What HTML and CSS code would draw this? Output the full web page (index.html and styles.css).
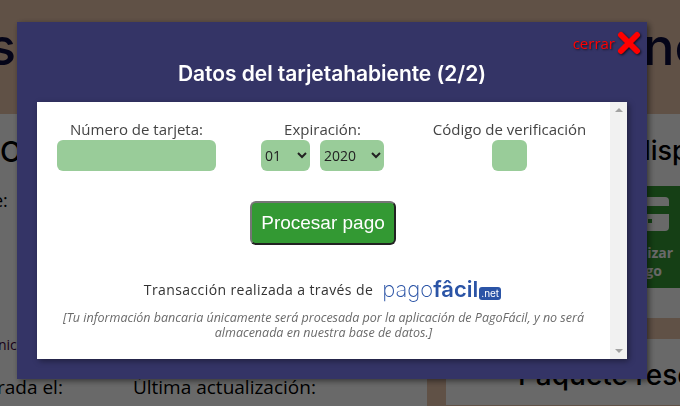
FILE: index.html
```html
<!DOCTYPE html>
<html lang="es">
  <head>
    <meta charset="UTF-8">
    <title>Datos del tarjetahabiente</title>
    <link rel="stylesheet" href="styles.css">
  </head>
  <body>
    <div class="page">
      <header class="page-header">
        <span class="page-header-start">s</span>
        <span class="page-header-end">no</span>
      </header>
      <div class="columns">
        <section class="panel panel-left">
          <h2 class="panel-title">O</h2>
          <p class="panel-label">e:</p>
          <p class="panel-small">nic</p>
          <div class="panel-dates">
            <span>rada el:</span>
            <span>Última actualización:</span>
          </div>
        </section>
        <div class="side">
          <section class="panel panel-pay">
            <h2 class="side-title">disp</h2>
            <div class="pay-tile">
              <span class="pay-card"><i class="pay-stripe"></i><i class="pay-dot"></i></span>
              <span class="pay-text">Realizar<br>pago</span>
            </div>
          </section>
          <section class="panel panel-package">
            <h2 class="package-title">Paquete rese</h2>
          </section>
        </div>
      </div>
    </div>

    <div class="overlay">
      <div class="modal">
        <a class="close" href="#">
          <span>cerrar</span>
          <svg width="24" height="24" viewBox="0 0 24 24">
            <path d="M4 4 L20 20 M20 4 L4 20" />
          </svg>
        </a>
        <h1 class="modal-title">Datos del tarjetahabiente (2/2)</h1>
        <div class="modal-body">
          <div class="modal-content">
            <div class="fields">
              <div class="field">
                <label for="numero">Número de tarjeta:</label>
                <input id="numero" class="input-number" type="text">
              </div>
              <div class="field">
                <label for="mes">Expiración:</label>
                <div class="selects">
                  <select id="mes" class="select-month"><option>01</option></select>
                  <select class="select-year"><option>2020</option></select>
                </div>
              </div>
              <div class="field">
                <label for="codigo">Código de verificación</label>
                <input id="codigo" class="input-code" type="text">
              </div>
            </div>
            <button class="submit" type="button">Procesar pago</button>
            <p class="provider">
              <span>Transacción realizada a través de</span>
              <span class="logo">
                <span class="logo-thin">pago</span><span class="logo-bold">fâcil</span><span class="logo-badge">.net</span>
              </span>
            </p>
            <p class="note">[Tu información bancaria únicamente será procesada por la aplicación de PagoFácil, y no será almacenada en nuestra base de datos.]</p>
          </div>
          <div class="scrollbar">
            <i class="arrow-up"></i>
            <i class="arrow-down"></i>
          </div>
        </div>
      </div>
    </div>
  </body>
</html>
```

FILE: styles.css
```css
html,
body {
  margin: 0;
  height: 100%;
  overflow: hidden;
}

body {
  background: #e8c4aa;
  font-family: "Open Sans", sans-serif;
  color: #000;
}

p,
h1,
h2 {
  margin: 0;
}

/* page behind the dialog */
.page-header {
  display: flex;
  justify-content: space-between;
  height: 114px;
  font: 500 52px/94px "Inter", sans-serif;
  color: #0b0b3a;
}
.page-header-start {
  margin-left: -12px;
}
.page-header-end {
  margin-right: -26px;
}

.columns {
  display: grid;
  grid-template-columns: 427px 1fr;
  gap: 19px;
}

.panel {
  background: #fff;
}

.panel-left {
  height: 292px;
}
.panel-title {
  font: 500 29px/40px "Inter", sans-serif;
  padding-top: 18px;
}
.panel-label {
  font-size: 18px;
  line-height: 24px;
  padding-top: 16px;
  margin-left: -7px;
}
.panel-small {
  font-size: 14px;
  line-height: 18px;
  padding-top: 124px;
  color: #400040;
  margin-left: -2px;
}
.panel-dates {
  display: flex;
  gap: 70px;
  font-size: 19px;
  line-height: 26px;
  padding-top: 20px;
  margin-left: -3px;
}

.side {
  display: flex;
  flex-direction: column;
  gap: 21px;
}

.panel-pay {
  height: 204px;
  padding-left: 164px;
}
.side-title {
  font: 500 27px/40px "Inter", sans-serif;
  padding-top: 17px;
  margin-left: 24px;
  height: 55px;
  white-space: nowrap;
}
.pay-tile {
  display: flex;
  flex-direction: column;
  align-items: center;
  width: 70px;
  height: 102px;
  padding-top: 11px;
  box-sizing: border-box;
  background: #339933;
  color: #fff;
}
.pay-card {
  display: block;
  width: 48px;
  height: 34px;
  background: #fff;
  border-radius: 4px;
}
.pay-stripe {
  display: block;
  height: 8px;
  margin-top: 9px;
  background: #339933;
}
.pay-dot {
  display: block;
  width: 4px;
  height: 4px;
  margin: 5px 0 0 27px;
  background: #339933;
}
.pay-text {
  margin-top: 13px;
  font-size: 14px;
  font-weight: 700;
  line-height: 18px;
  text-align: center;
}

.panel-package {
  height: 66px;
  padding-left: 72px;
}
.package-title {
  font: 500 28px/36px "Inter", sans-serif;
  padding-top: 18px;
  white-space: nowrap;
}

/* dialog */
.overlay {
  position: fixed;
  inset: 0;
  background: rgba(0, 0, 0, 0.59);
}

.modal {
  position: absolute;
  left: 17px;
  top: 22px;
  width: 590px;
  padding: 0 20px 20px;
  background: #343466;
  box-shadow: 2px 2px 6px rgba(0, 0, 0, 0.5);
}

.close {
  position: absolute;
  top: 9px;
  right: 6px;
  display: flex;
  align-items: center;
  gap: 2px;
  color: #f00;
  font-size: 15px;
  text-decoration: none;
  text-shadow: 1px 1px 2px rgba(0, 0, 0, 0.6);
}
.close path {
  fill: none;
  stroke: #f00;
  stroke-width: 6;
  stroke-linecap: round;
}
.close svg {
  filter: drop-shadow(1px 1px 1px rgba(0, 0, 0, 0.7));
}

.modal-title {
  height: 80px;
  box-sizing: border-box;
  padding-top: 37px;
  font: 600 21px/30px "Inter", sans-serif;
  letter-spacing: -0.05px;
  color: #fff;
  text-align: center;
}

.modal-body {
  display: flex;
  height: 257px;
  background: #fff;
  box-shadow: 2px 2px 6px rgba(0, 0, 0, 0.4);
}

.modal-content {
  flex: 1;
  min-width: 0;
  display: flex;
  flex-direction: column;
  align-items: center;
}

.scrollbar {
  flex: 0 0 17px;
  display: flex;
  flex-direction: column;
  justify-content: space-between;
  align-items: center;
  padding: 6px 0;
  box-sizing: border-box;
  background: #f1f1f1;
}
.arrow-up,
.arrow-down {
  width: 0;
  height: 0;
  border-left: 4px solid transparent;
  border-right: 4px solid transparent;
}
.arrow-up {
  border-bottom: 4px solid #a3a3a3;
}
.arrow-down {
  border-top: 4px solid #a3a3a3;
}

.fields {
  align-self: stretch;
  display: grid;
  grid-template-columns: 199px 173px 201px;
  padding-top: 17px;
}

.field {
  display: flex;
  flex-direction: column;
  align-items: center;
  font-size: 15px;
  line-height: 21px;
  color: #444;
}

.selects {
  display: flex;
  gap: 10px;
}

.input-number,
.input-code,
.selects select {
  height: 31px;
  box-sizing: border-box;
  border: none;
  border-radius: 6px;
  background-color: #99cc99;
  font-family: "Open Sans", sans-serif;
  font-size: 14px;
  color: #222;
}
.input-number {
  width: 159px;
}
.input-code {
  width: 35px;
}
.select-month {
  width: 49px;
}
.select-year {
  width: 64px;
}

.submit {
  margin: 30px 1px 0 0;
  width: 146px;
  height: 44px;
  padding: 0;
  background: #339933;
  border: 2px solid;
  border-color: #767676 #222 #222 #767676;
  border-radius: 6px;
  color: #fff;
  font: 19px "Liberation Sans", sans-serif;
}

.provider {
  display: flex;
  align-items: center;
  gap: 9px;
  margin: 25px 2px 0 0;
  height: 38px;
  font-size: 14px;
  letter-spacing: 0.4px;
  color: #333;
}

.logo {
  display: flex;
  align-items: baseline;
  color: #2b54a6;
  letter-spacing: 0;
  font-family: "Inter", sans-serif;
  font-size: 22px;
  line-height: 30px;
}
.logo-thin {
  font-weight: 200;
}
.logo-bold {
  font-weight: 600;
}
.logo-badge {
  margin-left: 1px;
  padding: 0 2px;
  background: #2b54a6;
  border-radius: 3px;
  color: #fff;
  font-size: 10px;
  line-height: 13px;
}

.note {
  width: 540px;
  margin-top: 2px;
  font-size: 12.5px;
  font-style: italic;
  line-height: 15px;
  text-align: center;
  color: #6a6a6a;
}
```
